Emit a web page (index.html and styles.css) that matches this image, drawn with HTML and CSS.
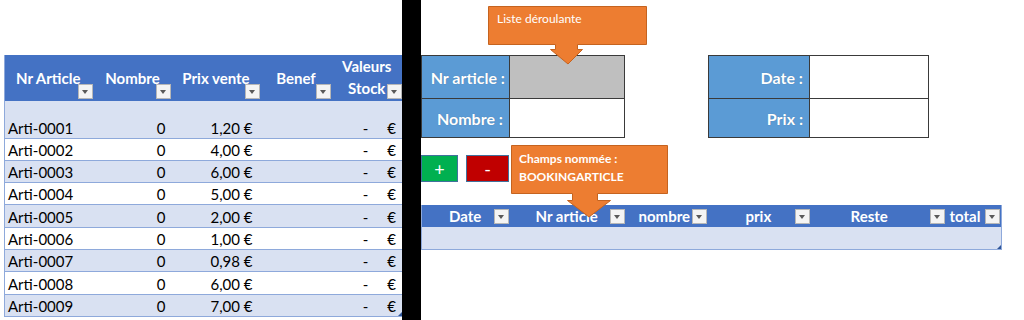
FILE: index.html
```html
<!DOCTYPE html>
<html lang="fr">
<head>
<meta charset="utf-8">
<title>Stock</title>
<link rel="stylesheet" href="styles.css">
</head>
<body>
<div class="page">
  <section class="left">
    <table class="stock">
      <colgroup><col class="c1"><col class="c2"><col class="c3"><col class="c4"><col class="c5"></colgroup>
      <thead>
        <tr>
          <th>Nr Article<span class="dd"></span></th>
          <th>Nombre<span class="dd"></span></th>
          <th>Prix vente<span class="dd"></span></th>
          <th>Benef<span class="dd"></span></th>
          <th class="wrap">Valeurs<br>Stock<span class="dd"></span></th>
        </tr>
      </thead>
      <tbody>
        <tr class="first band"><td>Arti-0001</td><td class="num">0</td><td class="price">1,20 €</td><td></td><td class="acc"><span>-</span><span>€</span></td></tr>
        <tr><td>Arti-0002</td><td class="num">0</td><td class="price">4,00 €</td><td></td><td class="acc"><span>-</span><span>€</span></td></tr>
        <tr class="band"><td>Arti-0003</td><td class="num">0</td><td class="price">6,00 €</td><td></td><td class="acc"><span>-</span><span>€</span></td></tr>
        <tr><td>Arti-0004</td><td class="num">0</td><td class="price">5,00 €</td><td></td><td class="acc"><span>-</span><span>€</span></td></tr>
        <tr class="band"><td>Arti-0005</td><td class="num">0</td><td class="price">2,00 €</td><td></td><td class="acc"><span>-</span><span>€</span></td></tr>
        <tr><td>Arti-0006</td><td class="num">0</td><td class="price">1,00 €</td><td></td><td class="acc"><span>-</span><span>€</span></td></tr>
        <tr class="band"><td>Arti-0007</td><td class="num">0</td><td class="price">0,98 €</td><td></td><td class="acc"><span>-</span><span>€</span></td></tr>
        <tr><td>Arti-0008</td><td class="num">0</td><td class="price">6,00 €</td><td></td><td class="acc"><span>-</span><span>€</span></td></tr>
        <tr class="band last"><td>Arti-0009</td><td class="num">0</td><td class="price">7,00 €</td><td></td><td class="acc"><span>-</span><span>€</span><i class="grip"></i></td></tr>
      </tbody>
    </table>
  </section>
  <div class="divider"></div>
  <section class="right">
    <div class="forms">
      <div class="form form-a">
        <div class="lbl r1">Nr article :</div><div class="val r1 grey"></div>
        <div class="lbl r2">Nombre :</div><div class="val r2"></div>
      </div>
      <div class="form form-b">
        <div class="lbl r1">Date :</div><div class="val r1"></div>
        <div class="lbl r2">Prix :</div><div class="val r2"></div>
      </div>
    </div>
    <div class="buttons">
      <div class="btn plus">+</div>
      <div class="btn minus">-</div>
    </div>
    <table class="booking">
      <colgroup><col class="b1"><col class="b2"><col class="b3"><col class="b4"><col class="b5"><col class="b6"></colgroup>
      <thead>
        <tr>
          <th><span class="t t-date">Date</span><span class="dd"></span></th>
          <th><span class="t t-nr">Nr article</span><span class="dd"></span></th>
          <th><span class="t t-nombre">nombre</span><span class="dd"></span></th>
          <th><span class="t t-prix">prix</span><span class="dd"></span></th>
          <th><span class="t t-reste">Reste</span><span class="dd"></span></th>
          <th><span class="t t-total">total</span><span class="dd"></span></th>
        </tr>
      </thead>
      <tbody>
        <tr><td></td><td></td><td></td><td></td><td></td><td><i class="grip"></i></td></tr>
      </tbody>
    </table>
    <div class="callout co1">
      <svg class="shape" width="162" height="62" viewBox="0 0 162 62">
        <path d="M0.5 0.5 H158.5 V38.5 H89.5 V43.5 H94.5 L80 58 L62.5 43.5 H67.5 V38.5 H0.5 Z" fill="#ed7d31" stroke="#c5631f" stroke-width="1"/>
      </svg>
      <span class="ctext">Liste déroulante</span>
    </div>
    <div class="callout co2">
      <svg class="shape" width="160" height="75" viewBox="0 0 160 75">
        <path d="M0.5 0.5 H156.5 V48.5 H86.5 V55.5 H99.5 L78 72 L56.5 55.5 H61.5 V48.5 H0.5 Z" fill="#ed7d31" stroke="#c5631f" stroke-width="1"/>
      </svg>
      <span class="ctext bold">Champs nommée :<br>BOOKINGARTICLE</span>
    </div>
  </section>
</div>
</body>
</html>
```

FILE: styles.css
```css
* { box-sizing: border-box; }
html, body { margin: 0; padding: 0; background: #fff; }
body {
  width: 1024px;
  height: 320px;
  overflow: hidden;
  font-family: Lato, "Open Sans", "Liberation Sans", sans-serif;
  font-size: 15px;
  color: #000;
}
.page { display: flex; height: 320px; }

/* ---------- left stock table ---------- */
.left { width: 402px; padding: 55px 0 0 4px; }
.stock {
  width: 398px;
  table-layout: fixed;
  border-collapse: collapse;
  border: 1px solid #8ea9db;
  border-top: none;
}
.stock col.c1 { width: 91px; }
.stock col.c2 { width: 78px; }
.stock col.c3 { width: 89px; }
.stock col.c4 { width: 71px; }
.stock col.c5 { width: 69px; }
.stock th {
  position: relative;
  height: 45px;
  background: #4472c4;
  color: #fff;
  font-weight: 700;
  text-align: center;
  padding: 0 4px 0 0;
  line-height: 22px;
  white-space: nowrap;
}
.stock th.wrap { padding: 0 2px 2px 0; }
.stock td {
  height: 22.3px;
  padding: 0 3px;
  line-height: 20px;
  vertical-align: bottom;
  border-top: 1px solid #8ea9db;
  white-space: nowrap;
}
.stock tr.first td { height: 37px; border-top: none; padding-bottom: 0; }
.stock tr.band td { background: #d9e1f2; }
.stock td.num { text-align: right; padding-right: 8px; }
.stock td.price { text-align: right; padding-right: 10px; }
.stock td.acc { position: relative; text-align: right; padding-right: 6px; }
.stock td.acc span:first-child { margin-right: 19px; }
.stock tr.last td { border-bottom: 1px solid #8ea9db; }

.dd {
  position: absolute;
  right: 3px;
  bottom: 2px;
  width: 15px;
  height: 15px;
  background: #f4f4f4;
  border: 1px solid #b7b7b7;
}
.dd::after {
  content: "";
  position: absolute;
  left: 3px;
  top: 5px;
  border-left: 3.5px solid transparent;
  border-right: 3.5px solid transparent;
  border-top: 4px solid #595959;
}
.stock th:nth-child(5) .dd { right: 0; }

.grip {
  position: absolute;
  right: 0;
  bottom: 0;
  width: 0;
  height: 0;
  border-left: 4px solid transparent;
  border-bottom: 4px solid #2f5597;
}

/* ---------- divider ---------- */
.divider { width: 19px; background: #000; flex: none; }

/* ---------- right area ---------- */
.right { position: relative; flex: 1; padding-top: 55px; }
.forms { display: flex; gap: 83px; }
.form {
  display: grid;
  grid-template-rows: 43px 38px;
  border: 1px solid #3a3a3a;
}
.form-a { grid-template-columns: 88px 114px; }
.form-b { grid-template-columns: 101px 118px; }
.lbl {
  background: #5b9bd5;
  color: #fff;
  font-weight: 700;
  font-size: 16px;
  display: flex;
  align-items: center;
  justify-content: flex-end;
  padding-right: 4px;
  border-right: 1px solid #3a3a3a;
  text-shadow: 0 0 1px rgba(0,0,0,0.25);
}
.val { background: #fff; }
.val.grey { background: #bfbfbf; }
.r1 { border-bottom: 1px solid #3a3a3a; }
.form-a .lbl.r2 { padding-right: 6px; }
.form-b .lbl { padding-right: 6px; }

.buttons { display: flex; gap: 8px; margin-top: 17px; }
.btn {
  height: 27px;
  border: 1px solid #41719c;
  color: #fff;
  font-size: 18px;
  display: flex;
  align-items: center;
  justify-content: center;
  line-height: 1;
}
.btn.plus { width: 37px; background: #00b050; }
.btn.minus { width: 43px; background: #c00000; }

.booking {
  margin-top: 23px;
  width: 580px;
  table-layout: fixed;
  border-collapse: collapse;
  border: 1px solid #8ea9db;
  border-top: none;
}
.booking col.b1 { width: 88px; }
.booking col.b2 { width: 116px; }
.booking col.b3 { width: 82px; }
.booking col.b4 { width: 103px; }
.booking col.b5 { width: 135px; }
.booking col.b6 { width: 56px; }
.booking th {
  position: relative;
  height: 22px;
  background: #4472c4;
  color: #fff;
  font-weight: 700;
  padding: 0;
  text-align: left;
  line-height: 20px;
  white-space: nowrap;
}
.booking th .dd { bottom: 3px; right: 1px; }
.booking th .t { display: inline-block; }
.t-date { margin-left: 27px; }
.t-nr { margin-left: 26px; }
.t-nombre { margin-left: 13px; }
.t-prix { margin-left: 38px; }
.t-reste { margin-left: 40px; }
.t-total { margin-left: 4px; }
.booking td {
  position: relative;
  height: 22px;
  background: #d9e1f2;
  padding: 0;
  border-bottom: 1px solid #8ea9db;
}

/* ---------- callouts ---------- */
.callout { position: absolute; }
.callout .shape { display: block; }
.co1 { left: 67px; top: 6px; }
.co2 { left: 90px; top: 145px; }
.ctext {
  position: absolute;
  left: 9px;
  color: #fff;
  font-size: 12px;
  line-height: 16px;
}
.co1 .ctext { top: 5px; }
.co2 .ctext { top: 5px; left: 8px; }
.ctext.bold { font-weight: 700; line-height: 18px; }
```
